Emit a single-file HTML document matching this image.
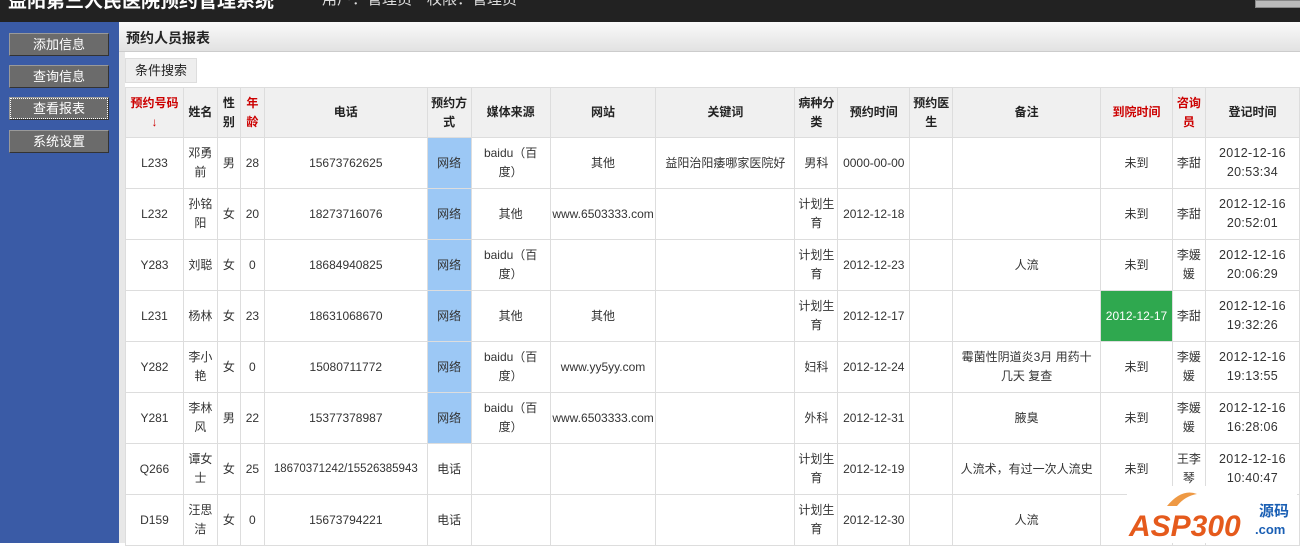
<!DOCTYPE html>
<html><head><meta charset="utf-8"><style>
*{margin:0;padding:0;box-sizing:border-box}
body{width:1300px;height:543px;overflow:hidden;background:#fff;font-family:"Liberation Sans","Noto Sans CJK SC",sans-serif;font-size:12px;color:#333;position:relative}
#top{position:absolute;left:0;top:0;width:1300px;height:22px;background:#222}
#top .t{position:absolute;left:8px;top:-14px;color:#fff;font-size:19px;font-weight:bold;white-space:nowrap}
#top .u{position:absolute;left:322px;top:-12px;color:#ddd;font-size:15px;white-space:nowrap}
#top .b{position:absolute;left:1255px;top:0;width:50px;height:8px;background:#bbb;border:1px solid #888}
#side{position:absolute;left:0;top:22px;width:119px;height:521px;background:#3a5ba6}
.btn{position:absolute;left:9px;width:100px;height:23px;background:#6b6b6b;color:#fff;text-align:center;line-height:22px;font-size:13px;border:1px solid #999;border-right-color:#333;border-bottom-color:#333}
.sel{outline:1px dotted #fff;outline-offset:-2px}
#gap{position:absolute;left:119px;top:22px;width:6px;height:521px;background:#e8e8e8}
#bar{position:absolute;left:119px;top:22px;width:1181px;height:30px;background:linear-gradient(#fafafa,#e2e2e2);border-bottom:1px solid #ccc}
#bar b{position:absolute;left:7px;top:6px;font-size:14px;color:#222}
#srch{position:absolute;left:125px;top:58px;width:72px;height:25px;background:#eee;border:1px solid #ddd;font-size:13px;line-height:23px;text-align:center;color:#222}
table{position:absolute;left:125px;top:87px;border-collapse:collapse;table-layout:fixed}
td,th{border:1px solid #ddd;text-align:center;line-height:19px;height:51px;padding:0;overflow:hidden;white-space:normal;word-break:break-all}
th{background:#f0f0f0;font-weight:bold;color:#222;height:50px}
th.r{color:#c00}
td.n{background:#9cc8f5}
td.g{background:#2fa84f;color:#fff}
td.d{font-size:12.5px;letter-spacing:0.3px}
#logo{position:absolute;left:1127px;top:486px;width:170px;height:57px;background:#fff}
</style></head><body>
<div id="top"><span class="t">益阳第三人民医院预约管理系统</span><span class="u">用户：管理员　权限：管理员</span><div class="b"></div></div>
<div id="side">
<div class="btn" style="top:11px">添加信息</div>
<div class="btn" style="top:43px">查询信息</div>
<div class="btn sel" style="top:75px">查看报表</div>
<div class="btn" style="top:108px">系统设置</div>
</div>
<div id="gap"></div>
<div id="bar"><b>预约人员报表</b></div>
<div id="srch">条件搜索</div>
<table>
<colgroup><col style="width:58px"><col style="width:34px"><col style="width:23px"><col style="width:24px"><col style="width:163px"><col style="width:44px"><col style="width:79px"><col style="width:106px"><col style="width:139px"><col style="width:43px"><col style="width:72px"><col style="width:43px"><col style="width:148px"><col style="width:72px"><col style="width:33px"><col style="width:94px"></colgroup>
<tr><th class="r">预约号码<br>↓</th><th>姓名</th><th>性别</th><th class="r">年龄</th><th>电话</th><th>预约方式</th><th>媒体来源</th><th>网站</th><th>关键词</th><th>病种分类</th><th>预约时间</th><th>预约医生</th><th>备注</th><th class="r">到院时间</th><th class="r">咨询员</th><th>登记时间</th></tr>
<tr><td>L233</td><td>邓勇前</td><td>男</td><td>28</td><td>15673762625</td><td class="n">网络</td><td>baidu（百<br>度）</td><td>其他</td><td>益阳治阳痿哪家医院好</td><td>男科</td><td>0000-00-00</td><td></td><td></td><td>未到</td><td>李甜</td><td class="d">2012-12-16<br>20:53:34</td></tr>
<tr><td>L232</td><td>孙铭阳</td><td>女</td><td>20</td><td>18273716076</td><td class="n">网络</td><td>其他</td><td>www.6503333.com</td><td></td><td>计划生育</td><td>2012-12-18</td><td></td><td></td><td>未到</td><td>李甜</td><td class="d">2012-12-16<br>20:52:01</td></tr>
<tr><td>Y283</td><td>刘聪</td><td>女</td><td>0</td><td>18684940825</td><td class="n">网络</td><td>baidu（百<br>度）</td><td></td><td></td><td>计划生育</td><td>2012-12-23</td><td></td><td>人流</td><td>未到</td><td>李媛媛</td><td class="d">2012-12-16<br>20:06:29</td></tr>
<tr><td>L231</td><td>杨林</td><td>女</td><td>23</td><td>18631068670</td><td class="n">网络</td><td>其他</td><td>其他</td><td></td><td>计划生育</td><td>2012-12-17</td><td></td><td></td><td class="g">2012-12-17</td><td>李甜</td><td class="d">2012-12-16<br>19:32:26</td></tr>
<tr><td>Y282</td><td>李小艳</td><td>女</td><td>0</td><td>15080711772</td><td class="n">网络</td><td>baidu（百<br>度）</td><td>www.yy5yy.com</td><td></td><td>妇科</td><td>2012-12-24</td><td></td><td>霉菌性阴道炎3月 用药十<br>几天 复查</td><td>未到</td><td>李媛媛</td><td class="d">2012-12-16<br>19:13:55</td></tr>
<tr><td>Y281</td><td>李林风</td><td>男</td><td>22</td><td>15377378987</td><td class="n">网络</td><td>baidu（百<br>度）</td><td>www.6503333.com</td><td></td><td>外科</td><td>2012-12-31</td><td></td><td>腋臭</td><td>未到</td><td>李媛媛</td><td class="d">2012-12-16<br>16:28:06</td></tr>
<tr><td>Q266</td><td>谭女士</td><td>女</td><td>25</td><td style="font-size:11.5px">18670371242/15526385943</td><td>电话</td><td></td><td></td><td></td><td>计划生育</td><td>2012-12-19</td><td></td><td>人流术，有过一次人流史</td><td>未到</td><td>王李琴</td><td class="d">2012-12-16<br>10:40:47</td></tr>
<tr><td>D159</td><td>汪思洁</td><td>女</td><td>0</td><td>15673794221</td><td>电话</td><td></td><td></td><td></td><td>计划生育</td><td>2012-12-30</td><td></td><td>人流</td><td></td><td></td><td></td></tr>
</table>
<div id="logo"><svg width="170" height="57"><path d="M40 20 Q55 2 70 8 Q58 10 50 20 Z" fill="#e94"/><text x="2" y="50" font-family="Liberation Sans" font-weight="bold" font-style="italic" font-size="30" fill="#e55a1c">ASP300</text><text x="132" y="30" font-family="Noto Sans CJK SC" font-weight="bold" font-size="15" fill="#1a5fb4">源码</text><text x="128" y="48" font-family="Liberation Sans" font-weight="bold" font-size="13" fill="#1a5fb4">.com</text></svg></div>
</body></html>
